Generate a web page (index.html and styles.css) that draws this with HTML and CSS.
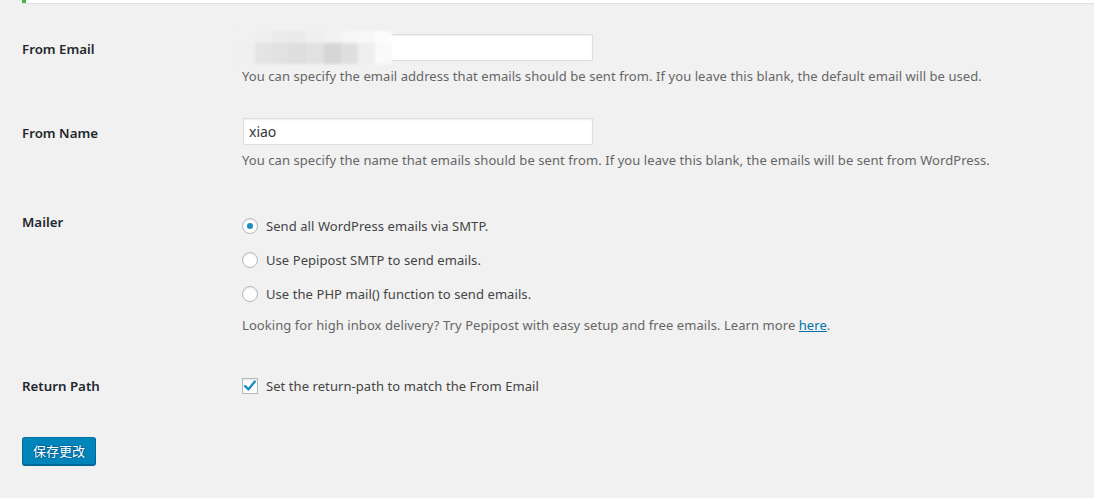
FILE: index.html
```html
<!DOCTYPE html>
<html>
<head>
<meta charset="utf-8">
<link rel="stylesheet" href="styles.css">
</head>
<body>
<div class="notice"></div>
<div class="form-table">
  <div class="row row-email">
    <div class="th">From Email</div>
    <div class="td">
      <div class="field">
        <input class="text" type="text" value="">
        <div class="mosaic">
          <span style="background:#f1f1f1"></span><span style="background:#eeeeee"></span><span style="background:#ebebeb"></span><span style="background:#eaeaea"></span><span style="background:#efefef"></span><span style="background:#f2f2f2"></span><span style="background:#f6f6f6"></span><span style="background:#f8f8f8"></span><span style="background:#fcfcfc"></span>
          <span style="background:#f0f0f0"></span><span style="background:#e4e4e4"></span><span style="background:#e1e1e1"></span><span style="background:#dedede"></span><span style="background:#e1e1e1"></span><span style="background:#d8d5d6"></span><span style="background:#e0dfe0"></span><span style="background:#efefef"></span><span style="background:#fafafa"></span>
        </div>
      </div>
      <p class="description">You can specify the email address that emails should be sent from. If you leave this blank, the default email will be used.</p>
    </div>
  </div>
  <div class="row row-name">
    <div class="th">From Name</div>
    <div class="td">
      <input class="text" type="text" value="xiao">
      <p class="description">You can specify the name that emails should be sent from. If you leave this blank, the emails will be sent from WordPress.</p>
    </div>
  </div>
  <div class="row row-mailer">
    <div class="th">Mailer</div>
    <div class="td">
      <div class="options">
        <label class="opt"><span class="radio checked"></span>Send all WordPress emails via SMTP.</label>
        <label class="opt"><span class="radio"></span>Use Pepipost SMTP to send emails.</label>
        <label class="opt"><span class="radio"></span>Use the PHP mail() function to send emails.</label>
      </div>
      <p class="description note">Looking for high inbox delivery? Try Pepipost with easy setup and free emails. Learn more <a href="#">here</a>.</p>
    </div>
  </div>
  <div class="row row-return">
    <div class="th">Return Path</div>
    <div class="td">
      <label class="opt"><span class="checkbox"><svg width="14" height="14" viewBox="0 0 14 14"><path d="M2.2 7.2 L5.4 10.4 L11.8 2.6" fill="none" stroke="#1e8cbe" stroke-width="2.4" stroke-linecap="round" stroke-linejoin="round"/></svg></span>Set the return-path to match the From Email</label>
    </div>
  </div>
</div>
<div class="submit"><button class="button-primary">保存更改</button></div>
</body>
</html>
```
FILE: styles.css
```css
html, body {
  margin: 0;
  padding: 0;
  background: #f1f1f1;
}
body {
  font-family: "Noto Sans", "Open Sans", "Noto Sans CJK SC", sans-serif;
  font-size: 13px;
  letter-spacing: 0.07px;
  color: #444;
  width: 1094px;
  height: 498px;
  overflow: hidden;
}
.notice {
  margin-left: 22px;
  height: 3px;
  background: #fff;
  border-left: 4px solid #46b450;
  box-shadow: 0 1px 1px rgba(0,0,0,0.08);
}
.form-table {
  margin: 16px 0 0 22px;
}
.row {
  display: flex;
  align-items: flex-start;
}
.th {
  width: 220px;
  flex: none;
  padding-top: 22px;
  font-size: 13.3px;
  font-weight: 600;
  line-height: 16px;
  letter-spacing: 0;
  color: #23282d;
}
.td {
  flex: 1;
  padding: 15px 0;
}
.field {
  position: relative;
}
input.text {
  display: block;
  margin: 0 0 0 1px;
  width: 350px;
  height: 27px;
  box-sizing: border-box;
  border: 1px solid #ddd;
  box-shadow: inset 0 1px 2px rgba(0,0,0,0.07);
  background: #fff;
  padding: 3px 5px;
  font-family: inherit;
  font-size: 14px;
  color: #32373c;
  outline: none;
}
.mosaic {
  position: absolute;
  left: -4px;
  top: -3px;
  width: 154px;
  height: 33px;
  display: grid;
  grid-template-columns: repeat(9, 1fr);
  grid-template-rows: 12px 21px;
  filter: blur(1.5px);
}
.description {
  margin: 5px 0 0;
  line-height: 20px;
  color: #666;
}
.row-name {
  margin-top: 2px;
}
.row-mailer {
  margin-top: 7px;
}
.options {
  display: flex;
  flex-direction: column;
  gap: 14px;
  padding-top: 9px;
}
.opt {
  display: flex;
  align-items: center;
  height: 20px;
  line-height: 20px;
  color: #444;
}
.radio, .checkbox {
  display: inline-block;
  flex: none;
  width: 16px;
  height: 16px;
  box-sizing: border-box;
  border: 1px solid #b4b9be;
  background: #fff;
  box-shadow: inset 0 1px 2px rgba(0,0,0,0.1);
  margin-right: 8px;
  position: relative;
}
.radio {
  border-radius: 50%;
}
.radio.checked::after {
  content: "";
  position: absolute;
  left: 4px;
  top: 4px;
  width: 6px;
  height: 6px;
  border-radius: 50%;
  background: #1e8cbe;
}
.checkbox svg {
  position: absolute;
  left: 0;
  top: 0;
}
.note {
  margin-top: 11px;
}
.note a {
  color: #0073aa;
  text-decoration: underline;
}
.row-return {
  margin-top: 6px;
}
.row-return .td {
  padding-top: 20px;
}
.submit {
  margin: 26px 0 0 22px;
}
.button-primary {
  display: inline-block;
  height: 28px;
  padding: 0 10px;
  box-sizing: border-box;
  background: #0085ba;
  border: 1px solid #0073aa;
  border-color: #0073aa #006799 #006799;
  border-radius: 3px;
  box-shadow: 0 1px 0 #006799;
  color: #fff;
  font-family: "Noto Sans CJK SC", sans-serif;
  font-size: 13px;
  line-height: 26px;
  text-shadow: 0 -1px 1px #006799, 1px 0 1px #006799, 0 1px 1px #006799, -1px 0 1px #006799;
}
```
